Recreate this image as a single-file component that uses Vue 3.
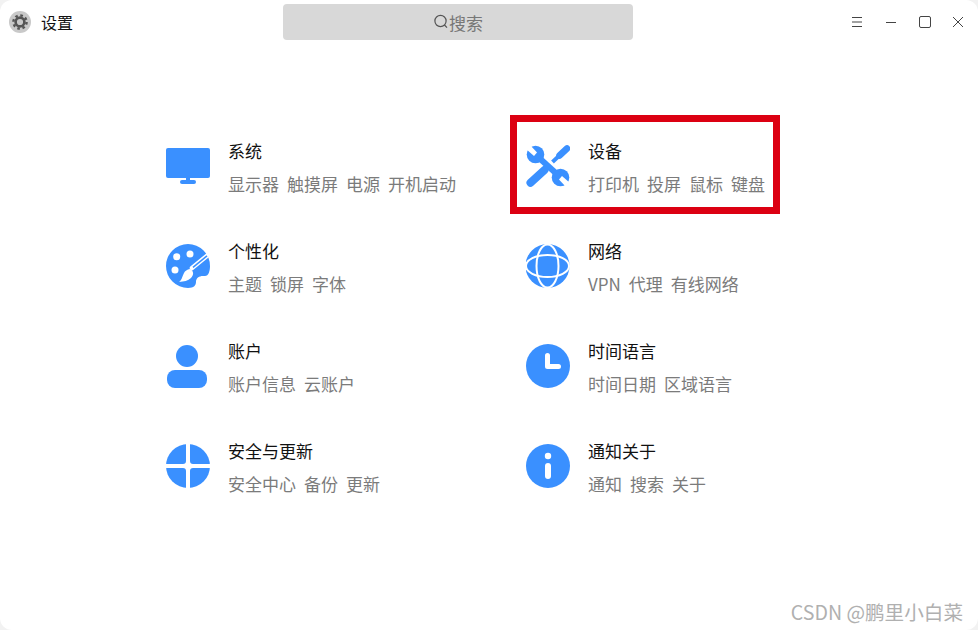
<script setup>
const settings = [
  { id: 'system', title: '系统', subs: ['显示器', '触摸屏', '电源', '开机启动'] },
  { id: 'device', title: '设备', subs: ['打印机', '投屏', '鼠标', '键盘'], marked: true },
  { id: 'personal', title: '个性化', subs: ['主题', '锁屏', '字体'] },
  { id: 'network', title: '网络', subs: ['VPN', '代理', '有线网络'] },
  { id: 'account', title: '账户', subs: ['账户信息', '云账户'] },
  { id: 'time', title: '时间语言', subs: ['时间日期', '区域语言'] },
  { id: 'security', title: '安全与更新', subs: ['安全中心', '备份', '更新'] },
  { id: 'notice', title: '通知关于', subs: ['通知', '搜索', '关于'] },
];
</script>

<template>
  <div class="window">
    <header class="titlebar">
      <div class="app-title">
        <svg class="app-icon" viewBox="0 0 22 22">
          <circle cx="11" cy="11" r="11" fill="#c9c9c9" />
          <circle cx="11" cy="11" r="6.6" fill="none" stroke="#555" stroke-width="2.4" stroke-dasharray="2.6 2.6" />
          <circle cx="11" cy="11" r="4.4" fill="none" stroke="#555" stroke-width="2.6" />
        </svg>
        <span>设置</span>
      </div>
      <div class="search">
        <svg class="search-icon" viewBox="0 0 16 16">
          <circle cx="7.5" cy="7" r="5.6" fill="none" stroke="#555" stroke-width="1.2" />
          <path d="M11.5 11 L14 13.6" fill="none" stroke="#555" stroke-width="1.2" />
        </svg>
        <span>搜索</span>
      </div>
      <div class="controls">
        <button class="ctrl" type="button">
          <svg viewBox="0 0 12 12"><path d="M1 1.5H11M1 6H11M1 10.5H11" /></svg>
        </button>
        <button class="ctrl" type="button">
          <svg viewBox="0 0 12 12"><path d="M1 6.5H11" /></svg>
        </button>
        <button class="ctrl" type="button">
          <svg viewBox="0 0 12 12"><rect x="0.5" y="0.5" width="11" height="11" rx="1.5" /></svg>
        </button>
        <button class="ctrl" type="button">
          <svg viewBox="0 0 12 12"><path d="M1 1L11 11M11 1L1 11" /></svg>
        </button>
      </div>
    </header>

    <main class="grid">
      <section v-for="item in settings" :key="item.id" class="item">
        <svg class="item-icon" viewBox="0 0 44 44">
          <template v-if="item.id === 'system'">
            <rect x="0" y="4" width="44" height="30" rx="2" fill="#3a90ff" />
            <rect x="20" y="33" width="4" height="4" fill="#3a90ff" />
            <rect x="14" y="36" width="16" height="4" rx="2" fill="#3a90ff" />
          </template>
          <template v-else-if="item.id === 'device'">
            <circle cx="9.500" cy="10.500" r="8.800" fill="#3a90ff" />
            <path d="M0 5L4 1L11 8.500L8 12Z" fill="#fff" />
            <circle cx="34.500" cy="33.500" r="8.800" fill="#3a90ff" />
            <path d="M44 39L40 43L33 35.500L36 32Z" fill="#fff" />
            <path d="M11 12L33 32" stroke="#3a90ff" stroke-width="6" />
            <path d="M18.500 26L4.500 38.800" stroke="#3a90ff" stroke-width="8" stroke-linecap="round" />
            <path d="M26.500 18L35 10" stroke="#3a90ff" stroke-width="4" />
            <path d="M33.500 11.500L41 4.500" stroke="#3a90ff" stroke-width="6.500" stroke-linecap="round" />
          </template>
          <template v-else-if="item.id === 'personal'">
            <path d="M22 0A22 22 0 0 0 22 44C28 44 30 41 30 38C30 34 33 32 37 32L39 32C42.500 32 44 27 44 22A22 22 0 0 0 22 0Z" fill="#3a90ff" />
            <circle cx="10.700" cy="12.700" r="3.500" fill="#fff" />
            <circle cx="24" cy="10" r="3.500" fill="#fff" />
            <circle cx="9" cy="26" r="3.500" fill="#fff" />
            <path d="M42 11L26 24" stroke="#fff" stroke-width="4.500" stroke-linecap="round" />
            <path d="M41 11.800L27 23.300" stroke="#3a90ff" stroke-width="1.500" />
            <path d="M24 25C28 27 28 31 25 34C22 37 18 37.500 13 38C16 36 16 33 18 29C19 27 21 25.500 24 25Z" fill="#fff" />
          </template>
          <template v-else-if="item.id === 'network'">
            <circle cx="21.500" cy="22" r="22" fill="#3a90ff" />
            <ellipse cx="21.500" cy="22" rx="11" ry="21.500" fill="none" stroke="#fff" stroke-width="2" />
            <ellipse cx="21.500" cy="22" rx="21.500" ry="11" fill="none" stroke="#fff" stroke-width="2" />
          </template>
          <template v-else-if="item.id === 'account'">
            <circle cx="21" cy="12" r="11" fill="#3a90ff" />
            <rect x="1" y="26" width="40" height="18" rx="8" fill="#3a90ff" />
          </template>
          <template v-else-if="item.id === 'time'">
            <circle cx="22" cy="22" r="22" fill="#3a90ff" />
            <path d="M21.500 11.500V22.500H32.500" fill="none" stroke="#fff" stroke-width="5" stroke-linecap="round" stroke-linejoin="round" />
          </template>
          <template v-else-if="item.id === 'security'">
            <circle cx="22" cy="22" r="22" fill="#3a90ff" />
            <path d="M20 0H24V44H20ZM0 20H44V24H0Z" fill="#fff" />
            <path d="M20 17Q20 20 17 20L17 24Q20 24 20 27L24 27Q24 24 27 24L27 20Q24 20 24 17Z" fill="#fff" />
          </template>
          <template v-else>
            <circle cx="22" cy="22" r="22" fill="#3a90ff" />
            <circle cx="22" cy="12" r="3.200" fill="#fff" />
            <rect x="19" y="19" width="6" height="16" rx="3" fill="#fff" />
          </template>
        </svg>
        <div class="text">
          <h2>{{ item.title }}</h2>
          <p>
            <span v-for="sub in item.subs" :key="sub">{{ sub }}</span>
          </p>
        </div>
        <div v-if="item.marked" class="mark"></div>
      </section>
    </main>

    <div class="watermark">CSDN @鹏里小白菜</div>
  </div>
</template>

<style scoped>
.window {
  position: relative;
  width: 978px;
  height: 630px;
  background: #ffffff;
  border-radius: 12px;
  overflow: hidden;
  font-family: "Noto Sans CJK SC", "Noto Sans", sans-serif;
}

.titlebar {
  display: grid;
  grid-template-columns: 283px 350px 1fr;
  height: 44px;
  padding-top: 4px;
  box-sizing: border-box;
  align-items: start;
}

.app-title {
  display: flex;
  align-items: center;
  gap: 10px;
  height: 36px;
  padding-left: 9px;
  font-size: 16px;
  color: #111111;
}

.app-icon {
  width: 22px;
  height: 22px;
}

.search {
  display: flex;
  align-items: center;
  justify-content: center;
  height: 36px;
  background: #d8d8d8;
  border-radius: 4px;
  font-size: 17px;
  color: #777777;
}

.search-icon {
  width: 16px;
  height: 16px;
}

.controls {
  display: flex;
  justify-content: flex-end;
  height: 36px;
  padding-right: 3px;
}

.ctrl {
  display: flex;
  align-items: center;
  justify-content: center;
  width: 33.500px;
  padding: 0;
  border: none;
  background: none;
}

.ctrl:first-child {
  margin-right: 1px;
}

.ctrl svg {
  width: 12px;
  height: 12px;
  fill: none;
  stroke: #444444;
  stroke-width: 1;
}

.grid {
  display: grid;
  grid-template-columns: 360px 360px;
  grid-auto-rows: 100px;
  padding: 72px 0 0 166px;
}

.item {
  position: relative;
  display: flex;
  gap: 18px;
  padding-top: 28px;
}

.item-icon {
  flex: none;
  width: 44px;
  height: 44px;
}

.text {
  margin-top: -5px;
}

.text h2 {
  margin: 0;
  font-size: 17px;
  font-weight: 400;
  line-height: 24px;
  color: #111111;
}

.text p {
  display: flex;
  gap: 8px;
  margin: 9px 0 0;
  font-size: 17px;
  line-height: 24px;
  color: #7b7b7b;
}

/* red box drawn over the device entry */
.mark {
  position: absolute;
  left: -16px;
  top: -1px;
  width: 270px;
  height: 99px;
  box-sizing: border-box;
  border: 7px solid #dc0012;
}

.watermark {
  position: absolute;
  right: 15px;
  bottom: 4px;
  font-size: 19.600px;
  color: #b0b0b0;
  line-height: 28px;
}
</style>

<style>
body {
  background: #f2f2f2;
}
</style>
